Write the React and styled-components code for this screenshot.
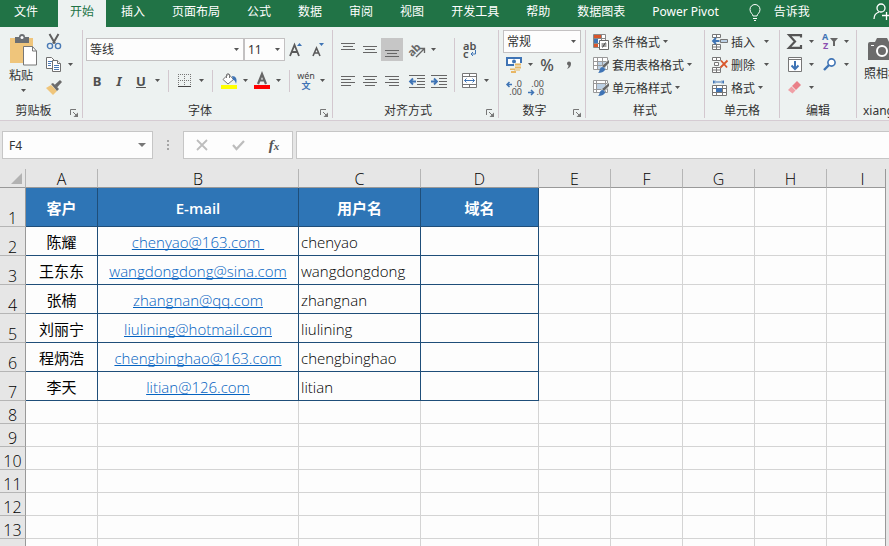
import { useState } from "react";
import styled, { createGlobalStyle } from "styled-components";

const tabs = [
  "插入",
  "页面布局",
  "公式",
  "数据",
  "审阅",
  "视图",
  "开发工具",
  "帮助",
  "数据图表",
  "Power Pivot",
];

const columns = ["A", "B", "C", "D", "E", "F", "G", "H", "I"];
const titles = ["客户", "E-mail", "用户名", "域名"];
const customers = [
  { name: "陈耀", email: "chenyao@163.com\u00a0", user: "chenyao" },
  { name: "王东东", email: "wangdongdong@sina.com", user: "wangdongdong" },
  { name: "张楠", email: "zhangnan@qq.com", user: "zhangnan" },
  { name: "刘丽宁", email: "liulining@hotmail.com", user: "liulining" },
  { name: "程炳浩", email: "chengbinghao@163.com", user: "chengbinghao" },
  { name: "李天", email: "litian@126.com", user: "litian" },
];
const emptyRows = [8, 9, 10, 11, 12, 13, 14];
const restColumns = ["E", "F", "G", "H", "I"];

export default function App() {
  return (
    <Page>
      <GlobalStyle />
      <TabBar>
        <FileTab>文件</FileTab>
        <ActiveTab>开始</ActiveTab>
        {tabs.map((tab) => (
          <Tab key={tab}>{tab}</Tab>
        ))}
        <TellMe>
          <BulbIcon />
          告诉我
        </TellMe>
        <ShareButton aria-label="共享">
          <PersonIcon />
        </ShareButton>
      </TabBar>
      <Ribbon>
        <ClipboardGroup />
        <FontGroup />
        <AlignGroup />
        <NumberGroup />
        <StylesGroup />
        <CellsGroup />
        <EditGroup />
        <CameraGroup />
      </Ribbon>
      <FormulaBar />
      <Sheet />
    </Page>
  );
}

function Group({ width, label, launcher, children }) {
  return (
    <GroupBox $width={width}>
      <GroupBody>{children}</GroupBody>
      <GroupLabel>
        <span>{label}</span>
        {launcher && (
          <Launcher aria-label={`${label}设置`}>
            <svg width="8" height="8" viewBox="0 0 8 8" fill="none" stroke="#777">
              <path d="M.5 6V.5H6M3 3l3 3" />
              <path d="M8 3.500V8H3.500L8 3.500z" fill="#777" stroke="none" />
            </svg>
          </Launcher>
        )}
      </GroupLabel>
    </GroupBox>
  );
}

function Arrow({ label = "更多" }) {
  return (
    <ArrowButton aria-label={label}>
      <Caret />
    </ArrowButton>
  );
}

function Caret() {
  return (
    <svg width="5" height="3" viewBox="0 0 5 3">
      <path d="M0 0h5L2.500 3z" fill="#555" />
    </svg>
  );
}

function Combo({ width, label, value }) {
  return (
    <ComboBox $width={width}>
      <select aria-label={label} defaultValue={value}>
        <option>{value}</option>
      </select>
      <Caret />
    </ComboBox>
  );
}

function ClipboardGroup() {
  return (
    <Group width={83} label="剪贴板" launcher>
      <Columns>
        <PasteButton>
          <svg width="29" height="32" viewBox="0 0 29 32">
            <path d="M1 4h23v25H1z" fill="#efc57b" />
            <path d="M6 3h4a3 3 0 0 1 6 0h4v6H6z" fill="#6b6f73" />
            <circle cx="13" cy="3.500" r="1.500" fill="#fff" />
            <path d="M14.500 12.500h9l4 4.500v14h-13z" fill="#fff" stroke="#777" />
            <path d="M23.500 12.500V17h4" fill="none" stroke="#777" />
          </svg>
          <span>粘贴</span>
          <Caret />
        </PasteButton>
        <div>
          <Row>
            <Tool aria-label="剪切">
              <svg width="16" height="16" viewBox="0 0 16 16" fill="none">
                <path d="M3.500 0l5.500 9.500M12.500 0L7 9.500" stroke="#5f5f5f" strokeWidth="2" />
                <circle cx="4" cy="12" r="2.600" stroke="#4a7ab5" strokeWidth="1.400" />
                <circle cx="12" cy="12" r="2.600" stroke="#4a7ab5" strokeWidth="1.400" />
              </svg>
            </Tool>
          </Row>
          <Row>
            <Tool aria-label="复制">
              <svg width="16" height="15" viewBox="0 0 16 15" fill="#fff" stroke="#707070">
                <path d="M.5.5h5l3 3v8h-8z" />
                <path d="M2 4.500h4M2 6.500h3M2 8.500h3" stroke="#4a7ab5" />
                <path d="M6.500 3.500h5l3 3v8h-8z" />
                <path d="M8 8.500h5M8 10.500h5M8 12.500h5" stroke="#4a7ab5" />
                <path d="M11.500 3.500v3h3" />
              </svg>
            </Tool>
            <Arrow />
          </Row>
          <Row>
            <Tool aria-label="格式刷">
              <svg width="16" height="15" viewBox="0 0 16 15">
                <path d="M0 8l5-3 6 6-4 4z" fill="#efc57b" />
                <path d="M5 4l2-1 6 6-2 2z" fill="#6b6b6b" />
                <path d="M8.500 5L14 0l2 2-5 5.500z" fill="#6b6b6b" />
              </svg>
            </Tool>
          </Row>
        </div>
      </Columns>
    </Group>
  );
}

function FontGroup() {
  return (
    <Group width={250} label="字体" launcher>
      <TwoRows $indent={3}>
        <Row>
          <Combo width={158} label="字体" value="等线" />
          <Combo width={41} label="字号" value="11" />
          <Tool aria-label="增大字号">
            <svg width="14" height="16" viewBox="0 0 14 16">
              <path d="M1 14L5.500 3 10 14M2.500 10h6" fill="none" stroke="#5a5a5a" strokeWidth="1.800" />
              <path d="M8 4h5L10.500 1z" fill="#3f74b5" />
            </svg>
          </Tool>
          <Tool aria-label="减小字号">
            <svg width="14" height="16" viewBox="0 0 14 16">
              <path d="M2 14l3.500-8L9 14M3 11h5" fill="none" stroke="#5a5a5a" strokeWidth="1.600" />
              <path d="M8 1h5l-2.500 3z" fill="#3f74b5" />
            </svg>
          </Tool>
        </Row>
        <Row>
          <Tool $weight={700}>B</Tool>
          <Tool $weight={700} $italic>
            I
          </Tool>
          <Tool $weight={700} $underline>
            U
          </Tool>
          <Arrow />
          <Divider />
          <Tool aria-label="边框">
            <svg width="14" height="14" viewBox="0 0 14 14" stroke="#777" fill="none">
              <path d="M0 .5h13M0 6.500h13M.5 0v12M6.500 0v12M12.500 0v12" strokeDasharray="1 1" />
              <path d="M0 12.500h13" stroke="#444" />
            </svg>
          </Tool>
          <Arrow />
          <Divider />
          <Tool aria-label="填充颜色">
            <svg width="16" height="17" viewBox="0 0 16 17">
              <path d="M2 7.500L7.500 2l5 5.500L7 12z" fill="#fff" stroke="#777" />
              <path d="M5.500 6V2.500a2 2 0 0 1 3 0V6" fill="none" stroke="#777" />
              <path d="M11 4c4 0 5.500 3 4 8-1-3-1-4-3-4z" fill="#3f74b5" />
              <path d="M0 13h16v4H0z" fill="#ff0" />
            </svg>
          </Tool>
          <Arrow />
          <Tool aria-label="字体颜色">
            <svg width="16" height="17" viewBox="0 0 16 17">
              <path d="M4 12L8 2l4 10M5.500 8.500h5" fill="none" stroke="#666" strokeWidth="2.200" />
              <path d="M0 13h16v4H0z" fill="#f00" />
            </svg>
          </Tool>
          <Arrow />
          <Divider />
          <Tool aria-label="拼音">
            <svg width="18" height="18" viewBox="0 0 18 18" textAnchor="middle">
              <text x="9" y="7" fontSize="9" fill="#444">
                wén
              </text>
              <text x="9" y="17" fontSize="9" fontWeight="700" fill="#3f74b5">
                文
              </text>
            </svg>
          </Tool>
          <Arrow />
        </Row>
      </TwoRows>
    </Group>
  );
}

// each entry is [x, y, width] of one line
function Lines({ lines, children }) {
  return (
    <svg width="16" height="14" viewBox="0 0 16 14">
      {lines.map(([x, y, w]) => (
        <rect key={y} x={x} y={y} width={w} height="1" fill="#666" />
      ))}
      {children}
    </svg>
  );
}

function AlignGroup() {
  return (
    <Group width={166} label="对齐方式" launcher>
      <Columns>
        <TwoRows $indent={4}>
          <Row $gap={3}>
            <Row>
              <Tool aria-label="顶端对齐">
                <Lines lines={[[1, 0, 14], [3, 3, 10], [1, 6, 14]]} />
              </Tool>
              <Tool aria-label="垂直居中">
                <Lines lines={[[1, 3, 14], [3, 6, 10], [1, 9, 14]]} />
              </Tool>
              <Tool aria-label="底端对齐" $pressed>
                <Lines lines={[[1, 7, 14], [3, 10, 10], [1, 13, 14]]} />
              </Tool>
            </Row>
            <Row>
              <Tool aria-label="方向">
                <svg width="18" height="16" viewBox="0 0 18 16">
                  <text x="0" y="12" fontSize="11" fontWeight="700" fill="#666" transform="rotate(-45 6 9)">
                    ab
                  </text>
                  <path d="M8 15l8-8M12 6.500h4.500V11" fill="none" stroke="#666" strokeWidth="1.300" />
                </svg>
              </Tool>
              <Arrow />
            </Row>
          </Row>
          <Row $gap={3}>
            <Row>
              <Tool aria-label="左对齐">
                <Lines lines={[[1, 2, 14], [1, 5, 10], [1, 8, 14], [1, 11, 10]]} />
              </Tool>
              <Tool aria-label="居中">
                <Lines lines={[[1, 2, 14], [3, 5, 10], [1, 8, 14], [3, 11, 10]]} />
              </Tool>
              <Tool aria-label="右对齐">
                <Lines lines={[[1, 2, 14], [5, 5, 10], [1, 8, 14], [5, 11, 10]]} />
              </Tool>
            </Row>
            <Row>
              <Tool aria-label="减少缩进量">
                <Lines lines={[[0, 1, 16], [8, 4, 8], [8, 7, 8], [8, 10, 8], [0, 13, 16]]}>
                  <path d="M7 7.500H1.500M4 4.500l-3 3 3 3" fill="none" stroke="#3f74b5" strokeWidth="1.800" />
                </Lines>
              </Tool>
              <Tool aria-label="增加缩进量">
                <Lines lines={[[0, 1, 16], [8, 4, 8], [8, 7, 8], [8, 10, 8], [0, 13, 16]]}>
                  <path d="M0 7.500h5.500M3 4.500l3 3-3 3" fill="none" stroke="#3f74b5" strokeWidth="1.800" />
                </Lines>
              </Tool>
            </Row>
          </Row>
        </TwoRows>
        <TallDivider />
        <TwoRows $indent={0}>
          <Row>
            <Tool aria-label="自动换行">
              <Stack>
                <SmallText $size={11} $bold>
                  {"ab\nc"}
                </SmallText>
                <svg width="14" height="16" viewBox="0 0 14 16">
                  <path d="M12.500 8v4H8M10 10l-2 2 2 2" fill="none" stroke="#3f74b5" />
                </svg>
              </Stack>
            </Tool>
          </Row>
          <Row>
            <Tool aria-label="合并后居中">
              <svg width="16" height="16" viewBox="0 0 16 16" fill="#fff" stroke="#777">
                <path d="M.5.5h14v14H.5zM.5 3.500h14M.5 11.500h14M7.500.5v3M7.500 11.500v3" />
                <path d="M2.500 7.500h10M4.500 5.500l-2 2 2 2M10.500 5.500l2 2-2 2" fill="none" stroke="#3f74b5" />
              </svg>
            </Tool>
            <Arrow />
          </Row>
        </TwoRows>
      </Columns>
    </Group>
  );
}

function NumberGroup() {
  return (
    <Group width={87} label="数字" launcher>
      <ThreeRows>
        <Row>
          <Combo width={78} label="数字格式" value="常规" />
        </Row>
        <Row>
          <Tool aria-label="会计数字格式">
            <svg width="16" height="16" viewBox="0 0 16 16">
              <path d="M1 1h14v7H1z" fill="#fff" stroke="#3f74b5" strokeWidth="2" />
              <circle cx="8" cy="4.500" r="2" fill="#3f74b5" />
              <path d="M8 6h8v8h-4v2H4v-5h4z" fill="#edf2f1" />
              <path d="M9 6.500h6v2H9zM9 9.500h6v2H9zM8 12.500h6v1H8zM4 11.500h5v1.500H4zM5 14h5v2H5z" fill="#e8b765" />
            </svg>
          </Tool>
          <Arrow />
          <Tool $size={16} $weight={500}>
            %
          </Tool>
          <Tool aria-label="千位分隔样式">
            <svg width="6" height="8" viewBox="0 0 6 8">
              <path d="M1 2.500a2 2 0 1 1 4 0C5 5 4 7 1 8c1-1.500 1.500-2 1.500-3.500A2 2 0 0 1 1 2.500z" fill="#666" />
            </svg>
          </Tool>
        </Row>
        <Row>
          <Tool aria-label="增加小数位数">
            <Stack>
              <SmallText $size={9} $right>
                {".0\n.00"}
              </SmallText>
              <svg width="16" height="16" viewBox="0 0 16 16">
                <path d="M6 4.500H1M3.500 2L1 4.500 3.500 7" fill="none" stroke="#3f74b5" strokeWidth="1.500" />
              </svg>
            </Stack>
          </Tool>
          <Tool aria-label="减少小数位数">
            <Stack>
              <SmallText $size={9} $right>
                {".00\n.0"}
              </SmallText>
              <svg width="16" height="16" viewBox="0 0 16 16">
                <path d="M0 12.500h5.500M3 10l2.500 2.500L3 15" fill="none" stroke="#3f74b5" strokeWidth="1.500" />
              </svg>
            </Stack>
          </Tool>
        </Row>
      </ThreeRows>
    </Group>
  );
}

function StylesGroup() {
  return (
    <Group width={119} label="样式">
      <ThreeRows>
        <TextTool>
          <svg width="16" height="16" viewBox="0 0 16 16">
            <path d="M.5.5h12v13H.5zM.5 4.500h12M.5 9.500h12M8.500.5v13" fill="#fff" stroke="#888" />
            <path d="M1 1h7v3H1zM1 10h4v3H1z" fill="#d9562b" />
            <path d="M1 5h4v4H1z" fill="#3f74b5" />
            <path d="M6.500 6.500h9v9h-9z" fill="#fff" stroke="#666" />
            <path d="M8.500 10h5M8.500 12h5M12.500 8.500l-3 5" stroke="#444" fill="none" />
          </svg>
          条件格式
          <Caret />
        </TextTool>
        <TextTool>
          <svg width="16" height="16" viewBox="0 0 16 16">
            <path d="M.5.5h14v12H.5z" fill="#fff" />
            <path d="M5 5h8v8H5z" fill="#bcd0e4" />
            <path d="M.5.5h14v12H.5zM.5 4.500h14M.5 8.500h14M4.500.5v12M9.500.5v12" fill="none" stroke="#999" />
            <BrushPaths />
          </svg>
          套用表格格式
          <Caret />
        </TextTool>
        <TextTool>
          <svg width="16" height="16" viewBox="0 0 16 16">
            <path d="M.5.5h14v12H.5zM.5 3.500h14M.5 9.500h14M3.500.5v12M12.500.5v12" fill="#fff" stroke="#999" />
            <path d="M4 4h8v5H4z" fill="#bcd0e4" />
            <BrushPaths />
          </svg>
          单元格样式
          <Caret />
        </TextTool>
      </ThreeRows>
    </Group>
  );
}

function BrushPaths() {
  return (
    <>
      <path d="M16 2v5l-5 5-3-2z" fill="#edf2f1" />
      <path d="M16 3v3l-5 5-2-2z" fill="#666" />
      <path d="M5 16c2-1 1-5 4-6 2 0 3 1 3 3-1 2-4 3-7 3z" fill="#3f74b5" />
    </>
  );
}

function CellsGroup() {
  return (
    <Group width={75} label="单元格">
      <ThreeRows>
        <Row>
          <TextTool>
            <svg width="16" height="16" viewBox="0 0 16 16" fill="#fff" stroke="#777">
              <path d="M.5.5h8v3h-8zM4.500.5v3M.5 10.500h8v5h-8zM4.500 10.500v5M.5 13h8" />
              <path d="M8.500 5.500h7v3h-7z" fill="#bcd0e4" />
              <path d="M7.500 7H1M4 4L1 7l3 3" fill="none" stroke="#3f74b5" strokeWidth="1.800" />
            </svg>
            插入
          </TextTool>
          <SplitArrow aria-label="插入选项">
            <Caret />
          </SplitArrow>
        </Row>
        <Row>
          <TextTool>
            <svg width="16" height="16" viewBox="0 0 16 16" fill="#fff" stroke="#777">
              <path d="M.5.5h8v3h-8zM4.500.5v3M2.500 5.500h4v3h-4zM.5 10.500h8v5h-8zM4.500 10.500v5M.5 13h8" />
              <path d="M9 3.500l6 7M15.500 3.500L8.500 10.500" stroke="#d9562b" strokeWidth="1.800" />
            </svg>
            删除
          </TextTool>
          <SplitArrow aria-label="删除选项">
            <Caret />
          </SplitArrow>
        </Row>
        <TextTool>
          <svg width="16" height="16" viewBox="0 0 16 16" fill="none" stroke="#777">
            <path d="M1 2h11M1.500.5v3M11.500.5v3M3 .5L1.500 2 3 3.500M10 .5L11.500 2 10 3.500" stroke="#3f74b5" />
            <path d="M.5 5.500h14v10H.5zM.5 8.500h14M.5 12.500h14M4.500 5.500v10M10.500 5.500v10" fill="#fff" />
            <path d="M4 8h6v4H4z" fill="#3f74b5" stroke="none" />
          </svg>
          格式
          <Caret />
        </TextTool>
      </ThreeRows>
    </Group>
  );
}

function EditGroup() {
  return (
    <Group width={77} label="编辑">
      <ThreeRows>
        <Row $gap={2}>
          <Row>
            <Tool aria-label="自动求和">
              <svg width="16" height="15" viewBox="0 0 16 15">
                <path d="M14 3.500V1.200H2.200L8 7.500l-6 6.300h12V11" fill="none" stroke="#555" strokeWidth="2.200" />
              </svg>
            </Tool>
            <Arrow />
          </Row>
          <Row>
            <Tool aria-label="排序和筛选">
              <svg width="17" height="17" viewBox="0 0 17 17" fontSize="9" fontWeight="700">
                <text x="0" y="7" fill="#3f74b5">
                  A
                </text>
                <text x="1" y="16" fill="#8a4fb0">
                  Z
                </text>
                <path d="M8 5h8l-3 3.500V13h-2V8.500z" fill="#666" />
              </svg>
            </Tool>
            <Arrow />
          </Row>
        </Row>
        <Row $gap={2}>
          <Row>
            <Tool aria-label="填充">
              <svg width="14" height="15" viewBox="0 0 14 15" fill="#fff" stroke="#777">
                <path d="M.5.5h13v14H.5zM.5 2.500h13" />
                <path d="M7 4v8M3.500 8.500L7 12l3.500-3.500" fill="none" stroke="#3f74b5" strokeWidth="2" />
              </svg>
            </Tool>
            <Arrow />
          </Row>
          <Row>
            <Tool aria-label="查找和选择">
              <svg width="14" height="13" viewBox="0 0 14 13" fill="none" stroke="#3f74b5">
                <circle cx="8.500" cy="4.500" r="3.600" fill="#fff" strokeWidth="1.600" />
                <path d="M6 7l-5 5" strokeWidth="2.400" />
              </svg>
            </Tool>
            <Arrow />
          </Row>
        </Row>
        <Row>
          <Tool aria-label="清除">
            <svg width="14" height="13" viewBox="0 0 14 13">
              <path d="M9 0l4 4-5 5-4-4z" fill="#ea8088" />
              <path d="M3.500 5.500l4 4-3 3L0 9z" fill="#f0a0a6" />
            </svg>
          </Tool>
          <Arrow />
        </Row>
      </ThreeRows>
    </Group>
  );
}

function CameraGroup() {
  return (
    <CameraBox>
      <CameraButton>
        <svg width="28" height="23" viewBox="0 0 28 23">
          <path d="M0 6a2 2 0 0 1 2-2h5l2-4h10l2 4h5a2 2 0 0 1 2 2v16H0z" fill="#6b6b6b" />
          <circle cx="14" cy="13" r="5" fill="none" stroke="#fff" strokeWidth="2" />
          <path d="M3 7h3v1H3z" fill="#fff" />
        </svg>
        照相机
      </CameraButton>
      <CameraLabel>xiang</CameraLabel>
    </CameraBox>
  );
}

function FormulaBar() {
  const [formula, setFormula] = useState("");
  return (
    <FormulaRow>
      <NameBox>
        <input aria-label="名称框" defaultValue="F4" />
        <button aria-label="名称列表">
          <svg width="8" height="4" viewBox="0 0 8 4">
            <path d="M0 0h8L4 4z" fill="#777" />
          </svg>
        </button>
      </NameBox>
      <Grip width="2" height="10" viewBox="0 0 2 10">
        <path d="M0 0h2v2H0zM0 4h2v2H0zM0 8h2v2H0z" fill="#a5a5a5" />
      </Grip>
      <FormulaTools>
        <button aria-label="取消">
          <svg width="12" height="10" viewBox="0 0 12 10">
            <path d="M1 0l10 10M11 0L1 10" stroke="#bdbdbd" strokeWidth="1.800" />
          </svg>
        </button>
        <button aria-label="输入">
          <svg width="13" height="10" viewBox="0 0 13 10">
            <path d="M1 5l3.500 4L12 1" fill="none" stroke="#bdbdbd" strokeWidth="2.200" />
          </svg>
        </button>
        <FxButton aria-label="插入函数">
          f<small>x</small>
        </FxButton>
      </FormulaTools>
      <FormulaInput
        aria-label="编辑栏"
        value={formula}
        onChange={(e) => setFormula(e.target.value)}
      />
    </FormulaRow>
  );
}

function Sheet() {
  return (
    <SheetArea>
      <Grid>
        <colgroup>
          <Col $width={26} />
          <Col $width={72} />
          <Col $width={201} />
          <Col $width={122} />
          <Col $width={118} />
          <Col $width={72} />
          <Col $width={72} />
          <Col $width={72} />
          <Col $width={72} />
          <Col />
        </colgroup>
        <thead>
          <tr>
            <Corner>
              <svg width="11" height="11" viewBox="0 0 11 11">
                <path d="M11 0v11H0z" fill="#b2b2b2" />
              </svg>
            </Corner>
            {columns.map((c) => (
              <ColumnHead key={c}>{c}</ColumnHead>
            ))}
          </tr>
        </thead>
        <tbody>
          <tr>
            <RowHead $height={39}>1</RowHead>
            {titles.map((t) => (
              <TitleCell key={t}>{t}</TitleCell>
            ))}
            {restColumns.map((c) => (
              <Cell key={c} />
            ))}
          </tr>
          {customers.map((c, i) => (
            <tr key={c.user}>
              <RowHead $height={29}>{i + 2}</RowHead>
              <NameCell>{c.name}</NameCell>
              <DataCell $center>
                <a href={`mailto:${c.email.trim()}`}>{c.email}</a>
              </DataCell>
              <DataCell>{c.user}</DataCell>
              <DataCell />
              {restColumns.map((r) => (
                <Cell key={r} />
              ))}
            </tr>
          ))}
          {emptyRows.map((n) => (
            <tr key={n}>
              <RowHead $height={23}>{n}</RowHead>
              {columns.map((c) => (
                <Cell key={c} />
              ))}
            </tr>
          ))}
        </tbody>
      </Grid>
    </SheetArea>
  );
}

const GlobalStyle = createGlobalStyle`
  * {
    box-sizing: border-box;
  }
  body {
    margin: 0;
    overflow: hidden;
    font-family: "Noto Sans", "Noto Sans CJK SC", sans-serif;
    font-size: 12px;
    color: #333;
  }
  button, input, select {
    margin: 0;
    padding: 0;
    border: 0;
    border-radius: 0;
    background: transparent;
    color: inherit;
    font: inherit;
  }
  svg {
    display: block;
    flex: none;
    overflow: visible;
  }
`;

const Page = styled.div`
  display: flex;
  flex-direction: column;
  height: 100vh;
  background: #e6e6e6;
`;

const TabBar = styled.nav`
  display: flex;
  gap: 3px;
  height: 27px;
  background: #217346;
  color: white;
`;

const Tab = styled.button`
  flex: none;
  padding: 0 12px 3px;
  line-height: 22px;
  white-space: nowrap;
`;

const FileTab = styled(Tab)`
  padding: 0 17px 3px 14px;
`;

const ActiveTab = styled(Tab)`
  background: #edf2f1;
  color: #217346;
`;

const TellMe = styled(Tab)`
  display: flex;
  align-items: center;
  gap: 13px;
  padding-left: 15px;
`;

const ShareButton = styled.button`
  margin-left: auto;
  padding-bottom: 5px;
`;

const Ribbon = styled.div`
  display: flex;
  flex: none;
  background: #edf2f1;
  border-bottom: 1px solid #d6ccd3;
  overflow: hidden;
`;

const GroupBox = styled.section`
  display: flex;
  flex-direction: column;
  flex: none;
  width: ${(props) => props.$width}px;
  margin: 3px 0 2px;
  border-right: 1px solid #d3c8cf;
`;

const GroupBody = styled.div`
  height: 74px;
`;

const GroupLabel = styled.div`
  display: flex;
  line-height: 14px;
  span {
    flex: 1;
    text-align: center;
  }
`;

const Launcher = styled.button`
  width: 15px;
  padding: 4px 0 0 3px;
`;

const Columns = styled.div`
  display: flex;
`;

const TwoRows = styled.div`
  display: flex;
  flex-direction: column;
  gap: 8px;
  padding: 8px 0 0 ${(props) => props.$indent}px;
`;

const ThreeRows = styled.div`
  padding-left: 4px;
`;

const Row = styled.div`
  display: flex;
  align-items: center;
  gap: ${(props) => props.$gap || 0}px;
  height: 23px;
`;

const Tool = styled.button`
  display: grid;
  place-items: center;
  width: 22px;
  height: 23px;
  background: ${(props) => (props.$pressed ? "#c6c6c6" : "transparent")};
  color: #505050;
  font-size: ${(props) => props.$size || 13}px;
  font-weight: ${(props) => props.$weight || 400};
  font-style: ${(props) => (props.$italic ? "italic" : "normal")};
  text-decoration: ${(props) => (props.$underline ? "underline" : "none")};
`;

// small glyphs with a drawing laid over them
const Stack = styled.span`
  display: grid;
  > * {
    grid-area: 1 / 1;
  }
`;

const SmallText = styled.span`
  font-size: ${(props) => props.$size}px;
  font-weight: ${(props) => (props.$bold ? 600 : 400)};
  line-height: 8px;
  text-align: ${(props) => (props.$right ? "right" : "left")};
  white-space: pre;
`;

const ArrowButton = styled.button`
  display: grid;
  place-items: center;
  width: 11px;
  height: 22px;
`;

const SplitArrow = styled(ArrowButton)`
  margin-left: 6px;
`;

const TextTool = styled.button`
  display: flex;
  align-items: center;
  gap: 3px;
  height: 23px;
  padding-left: 3px;
  white-space: nowrap;
`;

const PasteButton = styled.button`
  display: grid;
  grid-template-rows: 32px 16px 10px;
  gap: 2px;
  width: 43px;
  padding: 4px 0 0 9px;
  line-height: 16px;
  text-align: left;
  svg:last-child {
    margin: 3px 0 0 12px;
  }
`;

const ComboBox = styled.div`
  display: grid;
  align-items: center;
  width: ${(props) => props.$width}px;
  height: 23px;
  background: #fdfdfd;
  border: 1px solid #c3c1c2;
  select {
    grid-area: 1 / 1;
    appearance: none;
    width: 100%;
    height: 21px;
    padding-left: 3px;
    outline: 0;
  }
  svg {
    grid-area: 1 / 1;
    justify-self: end;
    margin-right: 4px;
    pointer-events: none;
  }
`;

const Divider = styled.div`
  width: 1px;
  height: 22px;
  margin: 0 5px;
  background: #d3c8cf;
`;

const TallDivider = styled(Divider)`
  height: 54px;
  margin: 8px 4px 0;
`;

const CameraBox = styled.section`
  flex: 1;
  min-width: 0;
  margin: 3px 0 2px;
  padding-left: 6px;
  overflow: hidden;
  white-space: nowrap;
`;

const CameraButton = styled.button`
  display: grid;
  justify-items: center;
  align-content: start;
  gap: 5px;
  width: 38px;
  height: 74px;
  padding-top: 8px;
  line-height: 16px;
`;

const CameraLabel = styled.div`
  line-height: 14px;
`;

const FormulaRow = styled.div`
  display: flex;
  flex: none;
  align-items: center;
  height: 28px;
  margin: 10px 0;
  padding-left: 2px;
`;

const NameBox = styled.div`
  display: flex;
  align-items: center;
  width: 151px;
  height: 28px;
  background: #fdfdfd;
  border: 1px solid #c6c6c6;
  input {
    flex: 1;
    min-width: 0;
    padding-left: 6px;
  }
  button {
    padding: 6px;
  }
`;

const Grip = styled.svg`
  margin: 0 14px;
`;

const FormulaTools = styled.div`
  display: flex;
  width: 110px;
  height: 28px;
  background: #fdfdfd;
  border: 1px solid #c6c6c6;
  button {
    display: grid;
    place-items: center;
    width: 36px;
  }
`;

const FxButton = styled.button`
  && {
    display: block;
  }
  color: #555;
  font-family: "Liberation Serif", serif;
  font-size: 15px;
  font-style: italic;
  font-weight: 700;
  small {
    font-size: 11px;
  }
`;

const FormulaInput = styled.input`
  flex: 1;
  min-width: 0;
  height: 28px;
  margin-left: 3px;
  padding: 0 6px;
  background: #fdfdfd;
  border: 1px solid #c6c6c6;
  border-right: 0;
`;

const SheetArea = styled.main`
  flex: 1;
  min-height: 0;
  margin-right: 3px;
  border-right: 1px solid #999;
  overflow: hidden;
`;

const Grid = styled.table`
  width: 100%;
  min-width: 899px;
  table-layout: fixed;
  border-collapse: separate;
  border-spacing: 0;
  color: #000;
  font-family: "Open Sans", "Noto Sans CJK SC", sans-serif;
  font-size: 15px;
  line-height: 19px;
  th, td {
    padding: 0;
    font-weight: 300;
  }
`;

const Col = styled.col`
  width: ${(props) => (props.$width ? `${props.$width}px` : "auto")};
`;

const ColumnHead = styled.th`
  height: 19px;
  background: #e6e6e6;
  border-right: 1px solid #b5b5b5;
  border-bottom: 1px solid #999;
  font-size: 16px;
  line-height: 16px;
  vertical-align: bottom;
`;

const Corner = styled(ColumnHead)`
  svg {
    margin: 0 3px 3px auto;
  }
`;

const RowHead = styled.th`
  height: ${(props) => props.$height}px;
  background: #e6e6e6;
  border-right: 1px solid #999;
  border-bottom: 1px solid #b5b5b5;
  font-size: 16px;
  line-height: 16px;
  vertical-align: bottom;
`;

const Cell = styled.td`
  background: #fdfdfd;
  border-right: 1px solid #d4d4d4;
  border-bottom: 1px solid #d4d4d4;
`;

const DataCell = styled(Cell)`
  && {
    padding: 3px 0 0 ${(props) => (props.$center ? 0 : 2)}px;
  }
  border-color: #1f4e79;
  text-align: ${(props) => (props.$center ? "center" : "left")};
  a {
    color: #0563c1;
    text-decoration-skip-ink: none;
    text-underline-offset: 1px;
  }
`;

const NameCell = styled(DataCell).attrs({ $center: true })`
  &&& {
    font-weight: 400;
  }
`;

const TitleCell = styled(Cell)`
  && {
    padding-top: 2px;
    font-weight: 600;
  }
  background: #2e75b6;
  border-color: #1f4e79;
  color: white;
  text-align: center;
`;

function BulbIcon() {
  return (
    <svg width="12" height="17" viewBox="0 0 12 17" fill="none" stroke="#fff">
      <path d="M4 12c0-2-3-3-3-6.500a5 5 0 0 1 10 0C11 9 8 10 8 12zM4 14.500h4M5 16.500h2" />
    </svg>
  );
}

function PersonIcon() {
  return (
    <svg width="16" height="17" viewBox="0 0 16 17" fill="none" stroke="#fff" strokeWidth="1.300">
      <circle cx="8" cy="5" r="4" />
      <path d="M1 16c0-4 2-6 5-7M9 12.500h7M13.500 9v8" />
    </svg>
  );
}
